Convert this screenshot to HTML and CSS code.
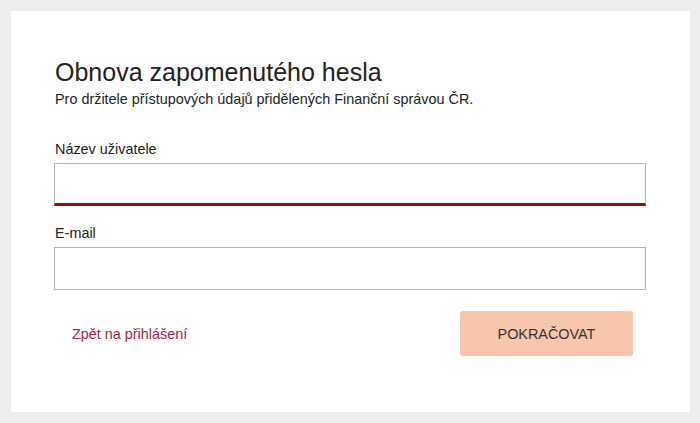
FILE: index.html
```html
<!DOCTYPE html>
<html lang="cs">
<head>
<meta charset="utf-8">
<title>Obnova zapomenutého hesla</title>
<link rel="stylesheet" href="styles.css">
</head>
<body>
<main class="card">
  <h1 class="title">Obnova zapomenutého hesla</h1>
  <p class="subtitle">Pro držitele přístupových údajů přidělených Finanční správou ČR.</p>
  <form class="form">
    <div class="field">
      <label class="label" for="user">Název uživatele</label>
      <input class="input input-active" id="user" type="text">
    </div>
    <div class="field">
      <label class="label" for="mail">E-mail</label>
      <input class="input" id="mail" type="text">
    </div>
    <div class="actions">
      <a class="back" href="#">Zpět na přihlášení</a>
      <button class="btn" type="button">POKRAČOVAT</button>
    </div>
  </form>
</main>
</body>
</html>
```
FILE: styles.css
```css
html, body {
  margin: 0;
  padding: 0;
}
body {
  background: #ededed;
  padding: 11px 10px 11px 11px;
  font-family: "Liberation Sans", Arial, sans-serif;
  color: #333;
}
.card {
  background: #fff;
  height: 401px;
  box-sizing: border-box;
  padding: 43px 44px 0 43px;
}
.title {
  margin: 0 0 0 1px;
  font-size: 25px;
  font-weight: normal;
  color: #222;
  line-height: 30px;
  padding-top: 3px;
}
.subtitle {
  margin: 3px 0 0 1px;
  font-size: 14.4px;
  line-height: 18px;
  color: #222;
}
.form {
  margin-top: 32px;
}
.field {
  display: flex;
  flex-direction: column;
}
.field + .field {
  margin-top: 18px;
}
.label {
  font-size: 14.4px;
  line-height: 18px;
  color: #222;
  margin: 0 0 5px 1px;
}
.input {
  box-sizing: border-box;
  width: 592px;
  height: 43px;
  border: 1px solid #b4b4b4;
  background: #fff;
  padding: 0 10px;
  font: inherit;
  outline: none;
}
.input-active {
  border-bottom: 3px solid #930d0d;
}
.actions {
  display: flex;
  justify-content: space-between;
  align-items: center;
  margin-top: 21px;
  padding: 0 13px 0 18px;
}
.back {
  font-size: 14.4px;
  color: #a0264b;
  text-decoration: none;
}
.btn {
  width: 173px;
  height: 45px;
  border: none;
  border-radius: 3px;
  background: #f7c6ad;
  color: #333;
  font-family: "Liberation Sans", Arial, sans-serif;
  font-size: 14.4px;
  cursor: pointer;
}
```
